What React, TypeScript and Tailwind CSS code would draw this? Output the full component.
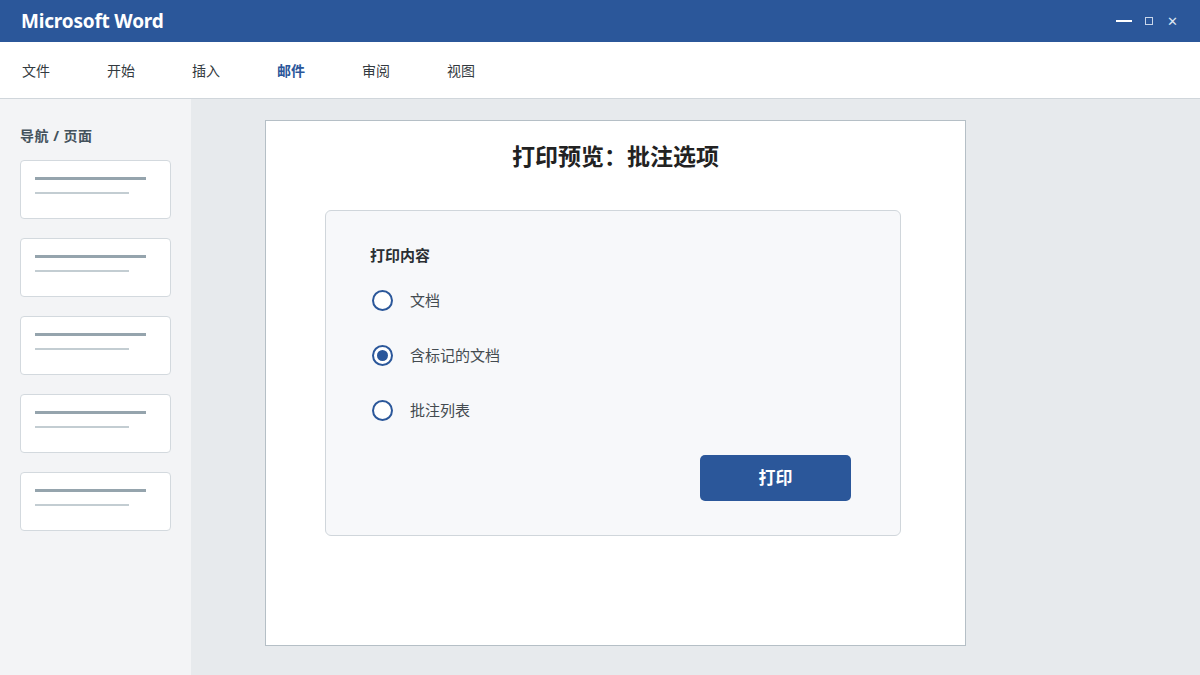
import React from "react";

const FONT = "font-['Noto_Sans','Noto_Sans_CJK_SC',sans-serif]";

const tabs = ["文件", "开始", "插入", "邮件", "审阅", "视图"];
const options = ["文档", "含标记的文档", "批注列表"];

function Radio({ checked }: { checked: boolean }) {
  return (
    <span className="ml-[2px] flex h-[21px] w-[21px] items-center justify-center rounded-full border-2 border-[#2b579a] bg-white">
      {checked && <span className="h-[11px] w-[11px] rounded-full bg-[#2b579a]" />}
    </span>
  );
}

function Thumb() {
  return (
    <div className="h-[59px] w-[151px] rounded-[4px] border border-[#d3d9de] bg-white px-[14px] pt-[16px]">
      <div className="h-[3px] w-[111px] bg-[#95a4ad]" />
      <div className="mt-[12px] h-[2px] w-[94px] bg-[#c3cdd2]" />
    </div>
  );
}

export default function App() {
  const selected = 1;
  return (
    <div className={`${FONT} flex h-[675px] w-[1200px] flex-col overflow-hidden`}>
      {/* title bar */}
      <div className="flex h-[42px] items-center justify-between bg-[#2b579a] pl-[21px] pr-[22px] text-white">
        <span className="text-[19px] font-bold tracking-[-0.2px]">Microsoft Word</span>
        <div className="flex items-center">
          <span className="h-[1.5px] w-[16px] bg-white" />
          <span className="ml-[13px] h-[8px] w-[8px] border border-[#c9d6ea]" />
          <span className="ml-[14px] text-[13px] leading-none text-[#dde6f2]">✕</span>
        </div>
      </div>

      {/* ribbon tabs */}
      <div className="flex h-[57px] items-center border-b border-[#d0d6db] bg-white pl-[22px]">
        {tabs.map((t) => (
          <span
            key={t}
            className={`w-[85px] text-[14px] ${t === "邮件" ? "font-bold text-[#2b579a]" : "text-[#333a40]"}`}
          >
            {t}
          </span>
        ))}
      </div>

      <div className="flex flex-1">
        {/* sidebar */}
        <div className="w-[191px] bg-[#f3f4f6] pl-[20px] pt-[26px]">
          <div className="text-[14px] font-bold tracking-[0.5px] text-[#44525c]">导航 / 页面</div>
          <div className="mt-[14px] flex flex-col gap-[19px]">
            {[0, 1, 2, 3, 4].map((i) => (
              <Thumb key={i} />
            ))}
          </div>
        </div>

        {/* document area */}
        <div className="flex-1 bg-[#e7eaed] pl-[74px] pt-[21px]">
          <div className="flex h-[526px] w-[701px] flex-col border border-[#b5bfc6] bg-white pt-[19px]">
            <h1 className="text-center text-[23px] font-bold leading-[32px] text-[#222]">打印预览：批注选项</h1>
            <div className="ml-[59px] mt-[38px] flex h-[326px] w-[576px] flex-col rounded-[6px] border border-[#d0d6db] bg-[#f7f8fa] pl-[44px] pr-[49px] pt-[33px]">
              <div className="text-[15px] font-bold text-[#2a2f33]">打印内容</div>
              <div className="mt-[23px] flex flex-col gap-[34px]">
                {options.map((o, i) => (
                  <label key={o} className="flex h-[21px] items-center">
                    <Radio checked={i === selected} />
                    <span className="ml-[17px] text-[15px] text-[#444b50]">{o}</span>
                  </label>
                ))}
              </div>
              <div className="mt-[34px] flex justify-end">
                <button className="h-[46px] w-[151px] rounded-[5px] bg-[#2b579a] text-[17px] font-bold text-white">
                  打印
                </button>
              </div>
            </div>
          </div>
        </div>
      </div>
    </div>
  );
}
